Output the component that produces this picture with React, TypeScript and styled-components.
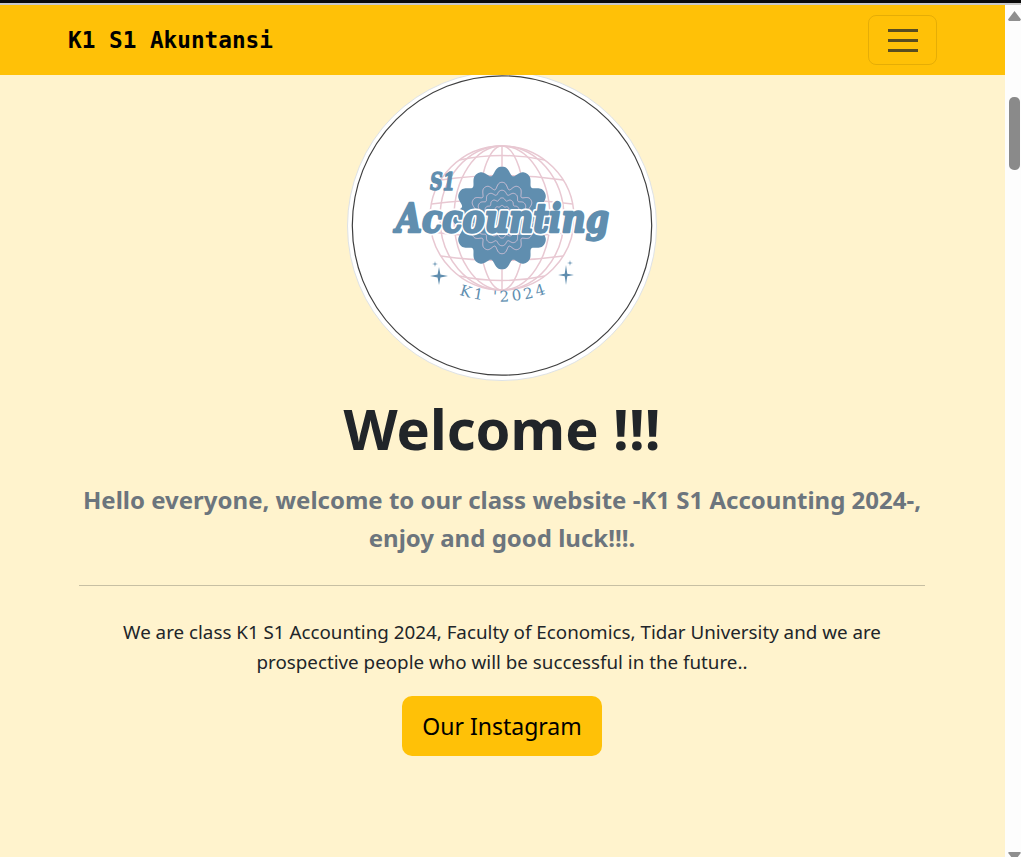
import React from "react";
import styled, { createGlobalStyle } from "styled-components";

const Global = createGlobalStyle`
  html, body { margin: 0; padding: 0; overflow: hidden; background: #fff; }
  body { font-family: "Noto Sans", "Open Sans", sans-serif; color: #212529; }
  * { box-sizing: border-box; }
`;

const Shell = styled.div`
  width: 1021px; height: 857px; display: flex; flex-direction: column; overflow: hidden;
`;
const WindowEdge = styled.div`
  height: 5px; flex: none; background: #c9c9c9; border-top: 3px solid #0b0b0b;
`;
const Viewport = styled.div`
  flex: 1; display: flex; min-height: 0;
`;
const Page = styled.div`
  flex: 1; min-width: 0; background: #fff3cd; display: flex; flex-direction: column;
`;
const Navbar = styled.nav`
  height: 70px; flex: none; position: relative; z-index: 1; background: #ffc107;
  display: flex; align-items: center; justify-content: space-between; padding: 0 68px;
`;
const Brand = styled.a`
  font-family: "DejaVu Sans Mono", monospace; font-weight: 700; font-size: 22.7px; color: #000;
`;
const Toggler = styled.button`
  width: 69px; height: 50px; background: transparent; border: 1px solid rgba(0,0,0,.1);
  border-radius: 8px; padding: 0; display: flex; flex-direction: column;
  align-items: center; justify-content: center; gap: 7px;
`;
const TogglerBar = styled.span`
  display: block; width: 30px; height: 3px; background: rgba(33,37,41,.75);
`;
const Main = styled.main`
  margin-top: -4px; display: flex; flex-direction: column; align-items: center;
  text-align: center; padding: 0 80px 0 79px;
`;
const Thumb = styled.div`
  width: 310px; height: 310px; border-radius: 50%; background: #fff;
  border: 1px solid #dee2e6; padding: 4px; flex: none;
`;
const Title = styled.h1`
  margin: 14px 0 0; font-size: 56px; line-height: 67px; font-weight: 700; color: #212529;
`;
const Lead = styled.p`
  margin: 19px 0 0; font-size: 24px; line-height: 38px; font-weight: 700; color: #6c757d;
`;
const Rule = styled.hr`
  width: 100%; margin: 28px 0 0; border: 0; border-top: 1px solid rgba(33,37,41,.25);
`;
const Body = styled.p`
  margin: 31px 0 0; width: 800px; font-size: 18.8px; line-height: 30px; color: #212529;
`;
const CTA = styled.a`
  margin-top: 19px; width: 200px; height: 60px; border-radius: 10px; background: #ffc107; color: #000;
  display: flex; align-items: center; justify-content: center; font-size: 23px;
`;
const Scrollbar = styled.div`
  width: 16px; flex: none; background: #fdfdfd; display: flex; flex-direction: column; align-items: center;
  padding-left: 3px;
`;
const ArrowUp = styled.div`
  margin-top: 6px; width: 13px; height: 10px; flex: none; background: #8f8f8f;
  clip-path: polygon(50% 0, 100% 85%, 92% 100%, 8% 100%, 0 85%);
`;
const ScrollThumb = styled.div`
  margin-top: 76px; width: 11px; height: 73px; border-radius: 5px; background: #8a8a8a; flex: none;
`;
const ArrowDown = styled.div`
  margin-top: auto; width: 13px; height: 5px; flex: none; background: #8f8f8f;
  clip-path: polygon(0 15%, 8% 0, 92% 0, 100% 15%, 75% 100%, 25% 100%);
`;

const BLUE = "#608eaf";
const PINK = "#e8c8d2";

function wavy(cx: number, cy: number, rx: number, ry: number, amp: number, lobes: number) {
  const pts: string[] = [];
  for (let i = 0; i < 360; i++) {
    const t = (i / 360) * Math.PI * 2;
    const k = 1 + amp * (Math.cos(lobes * t) - 0.18 * Math.cos(2 * lobes * t));
    pts.push(`${(cx + rx * k * Math.sin(t)).toFixed(2)},${(cy - ry * k * Math.cos(t)).toFixed(2)}`);
  }
  return `M${pts.join("L")}Z`;
}

function sparkle(x: number, y: number, a: number, b: number) {
  const c = b * 0.16;
  return `M${x} ${y - a}L${x + c} ${y - c}L${x + b} ${y}L${x + c} ${y + c}L${x} ${y + a}L${x - c} ${y + c}L${x - b} ${y}L${x - c} ${y - c}Z`;
}

const Wordmark = styled.text`
  font-family: "DejaVu Serif", serif; font-weight: 700; font-style: italic; font-size: 40px;
  fill: ${BLUE}; stroke: ${BLUE}; stroke-width: 2.4px; stroke-linejoin: round;
`;
const WordHalo = styled(Wordmark)`
  fill: #fff; stroke: #fff; stroke-width: 6px;
`;
const Mini = styled.text`
  font-family: "DejaVu Serif", serif; font-weight: 700; font-style: italic; font-size: 24px;
  fill: ${BLUE}; stroke: ${BLUE}; stroke-width: 1.4px; stroke-linejoin: round;
`;
const Stamp = styled.text`
  font-family: "DejaVu Serif", serif; font-size: 15px; letter-spacing: 3px; fill: ${BLUE};
`;

const Logo: React.FC = () => {
  const cx = 150, cy = 142, r = 72;
  const meridians = [24, 48, 62];
  const parallels = [-58, -38, -14, 14, 38, 58];
  return (
    <svg width="300" height="300" viewBox="0 0 300 300" role="img" aria-label="S1 Accounting K1 2024 logo" style={{ overflow: "visible" }}>
      <circle cx="150" cy="149.5" r="149.7" fill="#fff" stroke="#3f3f3f" strokeWidth="1.2" />
      <g fill="none" stroke={PINK} strokeWidth="1.5">
        <circle cx={cx} cy={cy} r={r} />
        <line x1={cx} y1={cy - r} x2={cx} y2={cy + r} />
        {meridians.map((m) => (
          <ellipse key={m} cx={cx} cy={cy} rx={m} ry={r} />
        ))}
        {parallels.map((p) => {
          const hw = Math.sqrt(r * r - p * p);
          const bow = p < 0 ? -9 : 9;
          return <path key={p} d={`M${cx - hw} ${cy + p}Q${cx} ${cy + p + bow} ${cx + hw} ${cy + p}`} />;
        })}
      </g>
      <path d={wavy(cx, cy, 46, 48, 0.085, 12)} fill={BLUE} />
      <g fill="none" stroke="#d7c3d8" strokeWidth="0.9">
        <path d={wavy(cx, cy, 31, 33, 0.1, 12)} />
        <path d={wavy(cx, cy, 25, 26, 0.08, 12)} />
        <path d={wavy(cx, cy, 18, 19, 0.07, 12)} />
        <path d={wavy(cx, cy, 11, 12, 0.06, 12)} />
      </g>
      <WordHalo x={44} y={156} textLength={213} lengthAdjust="spacingAndGlyphs" aria-hidden="true">Accounting</WordHalo>
      <Wordmark x={44} y={156} textLength={213} lengthAdjust="spacingAndGlyphs">Accounting</Wordmark>
      <Mini x={78} y={114} textLength={25} lengthAdjust="spacingAndGlyphs">S1</Mini>
      <path d={sparkle(87, 200, 9, 9)} fill={BLUE} />
      <path d={sparkle(214, 199, 10, 8)} fill={BLUE} />
      <path d={sparkle(83, 188, 3, 3)} fill={BLUE} />
      <path d={sparkle(218, 187, 3, 3)} fill={BLUE} />
      <path id="k1arc" d="M100 216Q150 236 204 214" fill="none" />
      <Stamp>
        <textPath href="#k1arc" startOffset="50%" textAnchor="middle">K1 '2024</textPath>
      </Stamp>
    </svg>
  );
};

export default function App() {
  return (
    <Shell>
      <Global />
      <WindowEdge />
      <Viewport>
        <Page>
          <Navbar>
            <Brand>K1 S1 Akuntansi</Brand>
            <Toggler aria-label="Toggle navigation">
              <TogglerBar />
              <TogglerBar />
              <TogglerBar />
            </Toggler>
          </Navbar>
          <Main>
            <Thumb><Logo /></Thumb>
            <Title>Welcome !!!</Title>
            <Lead>Hello everyone, welcome to our class website -K1 S1 Accounting 2024-,<br />enjoy and good luck!!!.</Lead>
            <Rule />
            <Body>We are class K1 S1 Accounting 2024, Faculty of Economics, Tidar University and we are prospective people who will be successful in the future..</Body>
            <CTA>Our Instagram</CTA>
          </Main>
        </Page>
        <Scrollbar>
          <ArrowUp />
          <ScrollThumb />
          <ArrowDown />
        </Scrollbar>
      </Viewport>
    </Shell>
  );
}
